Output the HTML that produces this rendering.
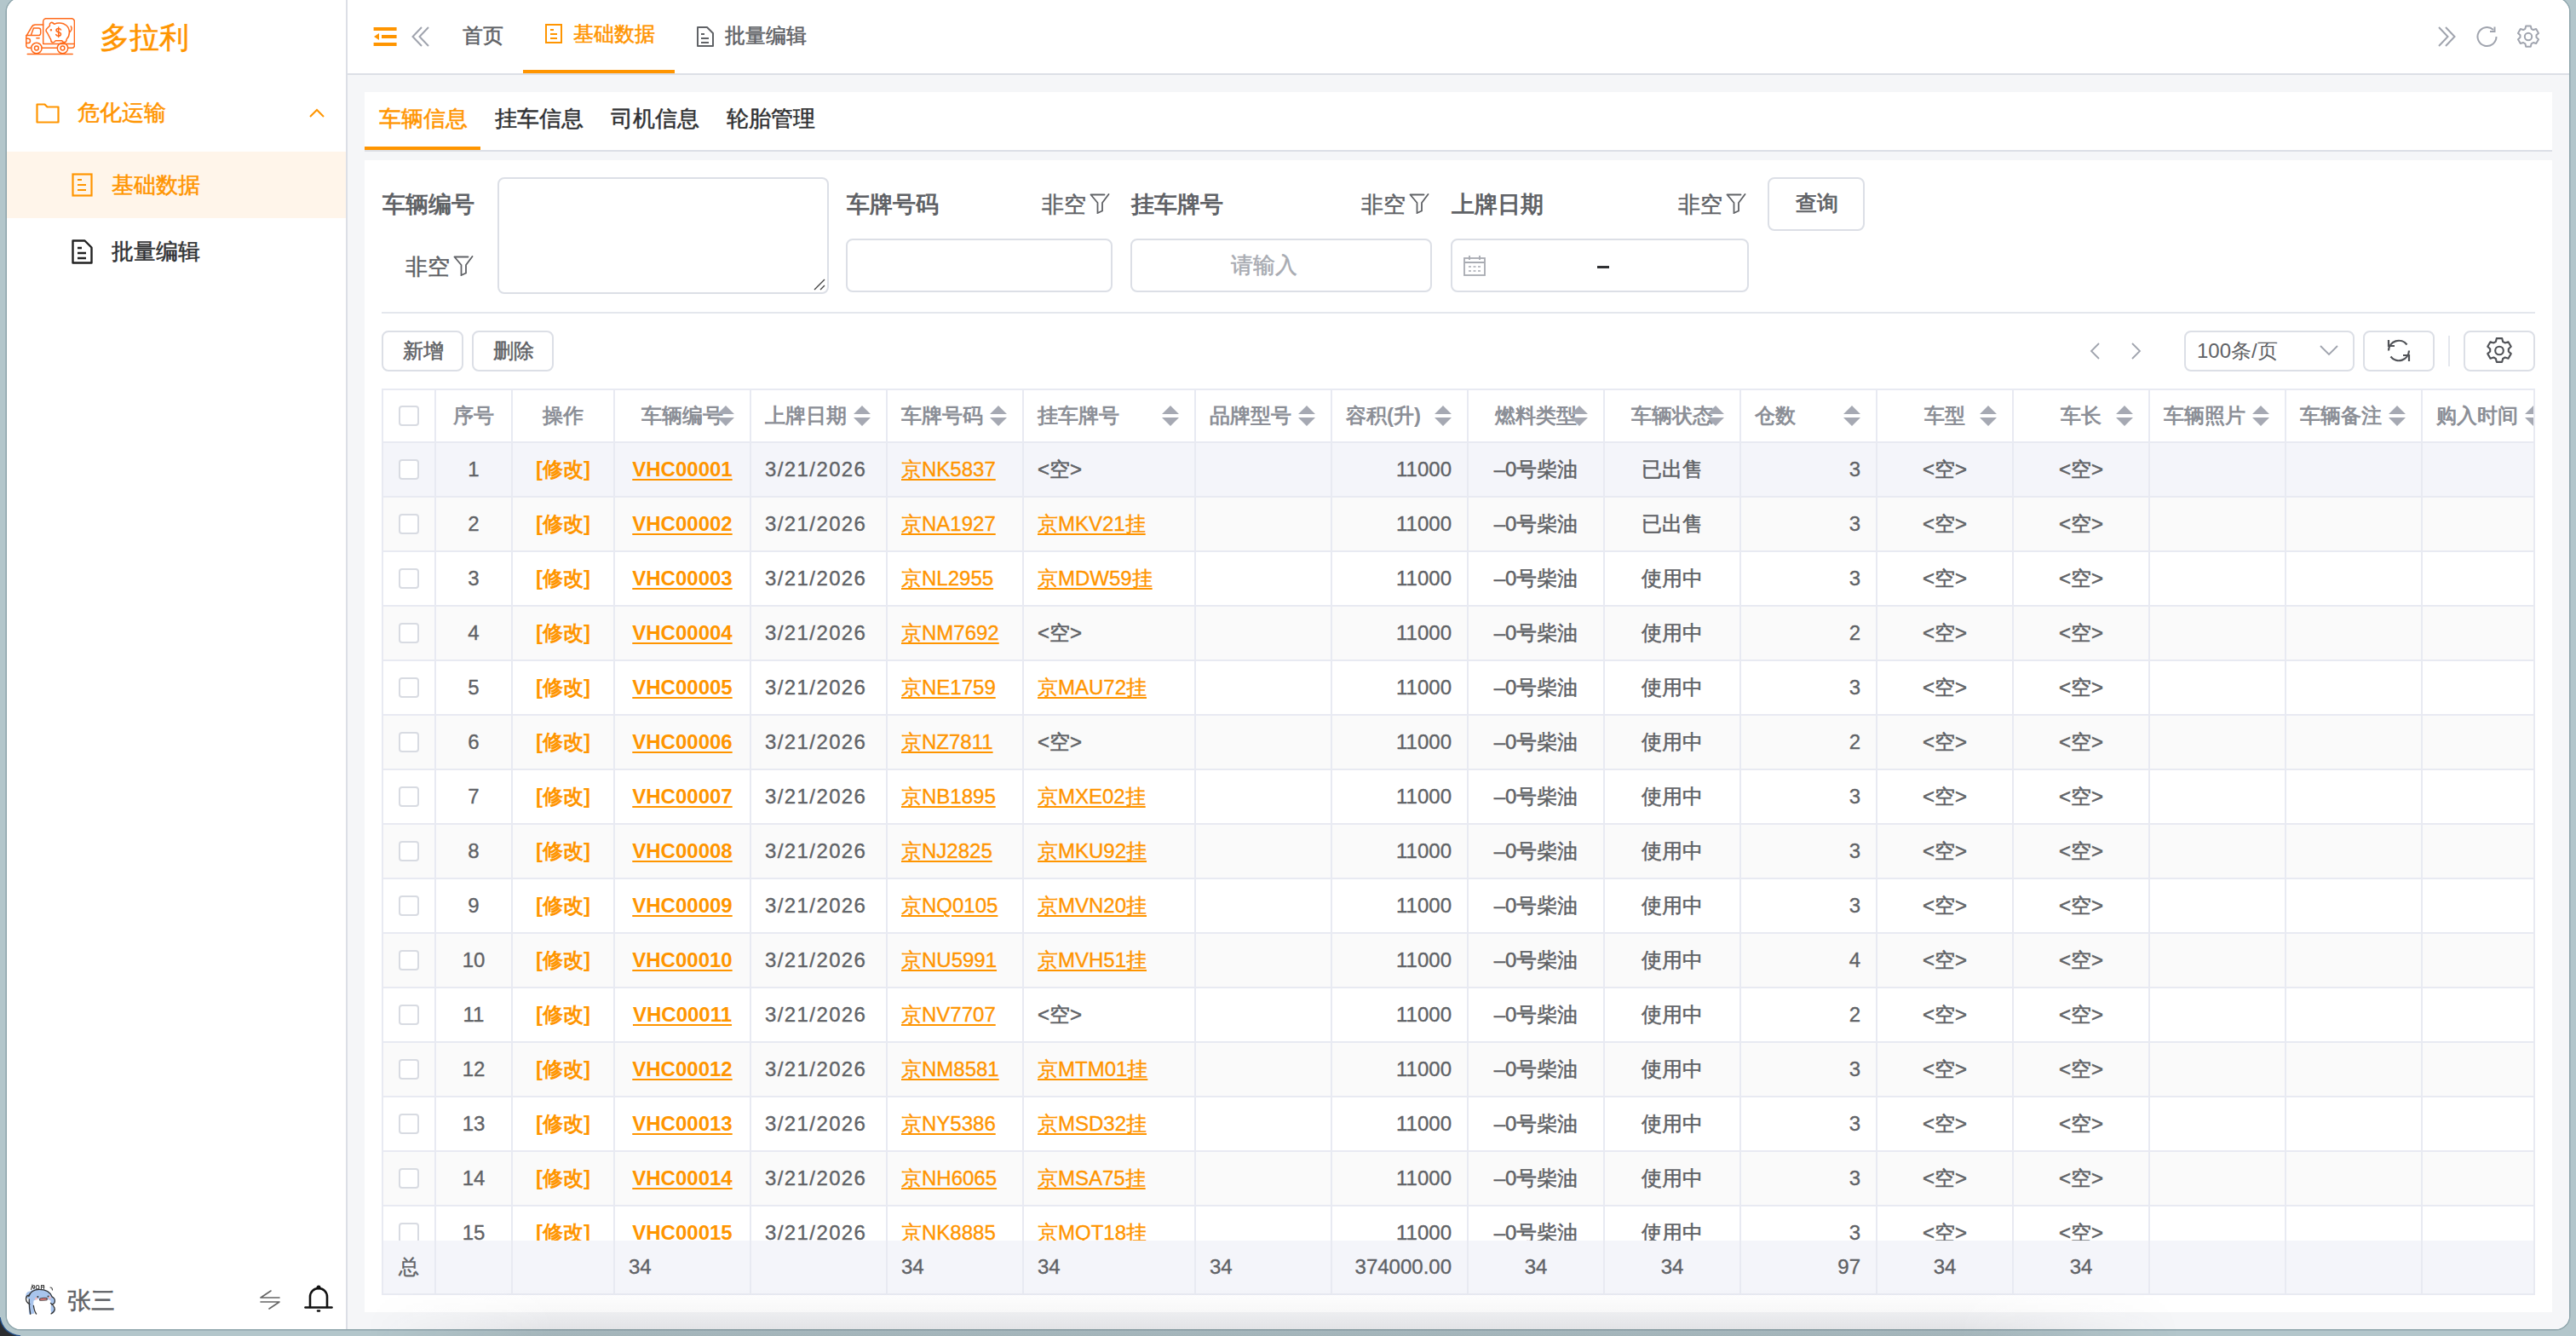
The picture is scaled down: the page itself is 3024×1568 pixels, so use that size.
<!DOCTYPE html>
<html><head><meta charset="utf-8">
<style>
*{box-sizing:border-box;margin:0;padding:0}
@media (max-width:1600px){html{zoom:0.5}}
html,body{width:3024px;height:1568px;overflow:hidden}
body{background:#b3c6cb;font-family:"Liberation Sans",sans-serif;font-weight:400;color:#606266;position:relative}
#win{position:absolute;left:8px;top:-2px;width:3008px;height:1562px;border-radius:16px;background:#fff;overflow:hidden;box-shadow:0 0 0 1.5px rgba(70,100,110,.35)}
#pg{position:absolute;left:-8px;top:2px;width:3024px;height:1568px}
.a{position:absolute}
.t{position:absolute;white-space:nowrap;line-height:1;-webkit-text-stroke:0.5px currentColor}
.ns{-webkit-text-stroke:0!important}
.side{left:0;top:0;width:406px;height:1568px;background:#fff}
.sideb{left:406px;top:0;width:2px;height:1568px;background:#dcdfe6}
.hdr{left:408px;top:0;width:2616px;height:86px;background:#fff}
.hdrb{left:408px;top:86px;width:2616px;height:2px;background:#dcdfe6}
.content{left:408px;top:88px;width:2616px;height:1480px;background:#f5f6f8}
.og{color:#ff9500}
.dk{color:#303133}
.gr{color:#606266}
.bd{font-weight:bold;-webkit-text-stroke:0}
.inp{position:absolute;border:2px solid #dcdfe6;border-radius:8px;background:#fff}
.btn{position:absolute;border:2px solid #dcdfe6;border-radius:8px;background:#fff}
/* table */
#tbl{position:absolute;left:448px;top:456px;width:2528px;height:1064px;border:2px solid #e8eaf2;overflow:hidden;background:#fff}
.tr{display:flex;height:64px;border-bottom:2px solid #e8eaf2;width:2700px}
.tr.th{height:62px}
.tr.cur{background:#f4f5fa}
.tr.str{background:#fafafa}
.td{position:relative;flex:none;height:100%;border-right:2px solid #e8eaf2;display:flex;align-items:center;font-size:24px;line-height:1;white-space:nowrap;color:#606266;-webkit-text-stroke:0.35px currentColor}
.td.ctr{justify-content:center}
.td.lft{justify-content:flex-start;padding-left:16px}
.td.rgt{justify-content:flex-end;padding-right:18px}
.th .td{color:#8c8f97;font-weight:bold;-webkit-text-stroke:0}
.sort{position:absolute;right:18px;top:18px}
.cb{display:block;width:24px;height:24px;border:2px solid #d8dbe2;border-radius:4px;background:#fff}
.op{color:#ff9500;font-weight:bold;-webkit-text-stroke:0}
.vl{color:#ff9500;font-weight:bold;-webkit-text-stroke:0;text-decoration:underline;text-underline-offset:3px;text-decoration-thickness:2px}
.dt{letter-spacing:1.4px}
.s{-webkit-text-stroke:0.5px currentColor}
.lk{color:#ff9500;text-decoration:underline;text-underline-offset:3px;text-decoration-thickness:2px}
#tbody{position:absolute;left:0;top:62px;height:936px;overflow:hidden}
.tf{position:absolute;left:0;top:998px;height:62px;background:#f4f5fa;border-bottom:none}
</style></head>
<body>
<svg style="position:absolute;left:0;top:1540px" width="30" height="28" viewBox="0 0 30 28"><path d="M0 6Q3 25 24 28H0Z" fill="#2b2d30"/><path d="M0 6Q3 25 24 28" fill="none" stroke="#24508a" stroke-width="1.4"/></svg>
<div id="win"><div id="pg">
  <div class="a side"></div>
  <div class="a sideb"></div>
  <div class="a hdr"></div>
  <div class="a hdrb"></div>
  <div class="a content"></div>

  <!-- sidebar -->
  <svg class="a" style="left:30px;top:21px" width="58" height="44" viewBox="0 0 58 44" fill="none" stroke="#ff6a1a" stroke-width="1.5" stroke-linecap="round" stroke-linejoin="round">
    <path d="M20.7 30.4V4.2a3.5 3.5 0 0 1 3.5-3.5h29.7a3.5 3.5 0 0 1 3.5 3.5v26.2H20.7"/>
    <path d="M19.2 35.2h17.9M49.8 35.2h4.8a2.8 2.8 0 0 0 2.8-2.8v-2"/>
    <path d="M20.7 8H11.6a5 5 0 0 0-4.6 3L1.3 20.6A4 4 0 0 0 .8 22.5v10a2.8 2.8 0 0 0 2.8 2.8h2.6"/>
    <path d="M.8 20.6H15.2a2.5 2.5 0 0 0 2.5-2.5v-3.6a2.5 2.5 0 0 0-2.5-2.5H9.4M9.4 12 6.3 20.6"/>
    <path d="M.8 24.2h2a2.7 2.7 0 0 1 0 5.4h-2"/>
    <path d="M12.9 23.8h3.2"/>
    <circle cx="12.9" cy="35.5" r="6.2"/><circle cx="12.9" cy="35.5" r="2.4"/>
    <circle cx="43.5" cy="35.5" r="6.2"/><circle cx="43.5" cy="35.5" r="2.4"/>
    <path d="M2.2 42.5h53"/>
    <path d="M25.5 17.5c-1.5-1.5-1.8-3.5-.6-4.8l3.5-3.4c-.3-1.4.1-2.9 1.2-3.6 1.3-.8 3 .4 4 1.6 1.7-.9 3.8-1.4 6-1.4 7 0 11.8 4.7 11.8 11.2 0 3.2-1.1 5.8-3 7.6-.6.6-.3 1.6-.5 2.4-.4 1.1-1.5 1.6-2.7 1.5-1.1-.2-1.8-.8-2.3-1.8h-7.8c-.6 1.3-1.7 2.1-3 2-1.5-.1-2.3-1.4-2.3-2.9 0-.9-.5-1.5-1.1-2.2z"/>
    <path d="M53.3 9.9c1.4 1.6 1 4.9-1.4 6.8"/>
    <path d="M38.7 10.9v11.7M41.5 14c-.4-1-1.5-1.6-2.8-1.6-1.6 0-2.7.9-2.7 2.1s1.1 1.8 2.7 2.2c1.7.4 2.8 1.1 2.8 2.4 0 1.2-1.2 2.1-2.8 2.1-1.4 0-2.5-.6-3-1.6"/>
    <circle cx="29.9" cy="14.3" r=".5" fill="#ff6a1a"/>
  </svg>
  <div class="t og" style="left:117px;top:26px;font-size:35px">多拉利</div>

  <svg class="a" style="left:42px;top:121px" width="28" height="24" viewBox="0 0 28 24" fill="none" stroke="#ff9500" stroke-width="2.2" stroke-linejoin="round"><path d="M1.5 1.5h9l3 3h13v18h-25z"/></svg>
  <div class="t og" style="left:91px;top:119px;font-size:26px">危化运输</div>
  <svg class="a" style="left:363px;top:127px" width="18" height="11" viewBox="0 0 18 11" fill="none" stroke="#ff9500" stroke-width="2"><path d="M1 10L9 2l8 8"/></svg>

  <div class="a" style="left:0;top:178px;width:406px;height:78px;background:#fff5ea"></div>
  <svg class="a" style="left:84px;top:203px" width="25" height="28" viewBox="0 0 25 28" fill="none" stroke="#ff9500" stroke-width="2.2"><rect x="1.5" y="1.5" width="22" height="25"/><path d="M7 8h5M7 14h10M7 20h10"/></svg>
  <div class="t og" style="left:131px;top:204px;font-size:26px">基础数据</div>

  <svg class="a" style="left:84px;top:281px" width="25" height="29" viewBox="0 0 25 29" fill="none" stroke="#222" stroke-width="2.4" stroke-linejoin="round"><path d="M1.5 1.5h14l8 8v18h-22z"/><path d="M7 10h5M7 16h10M7 22h10"/></svg>
  <div class="t" style="left:131px;top:282px;font-size:26px;color:#303133">批量编辑</div>

  <svg class="a" style="left:25px;top:1500px" width="45" height="48" viewBox="0 0 45 48">
    <path d="M9 42.5C8.8 36 8.5 30 9 25c-2.5-1-4-3-3.6-5.5C6 17 8 15.5 10.5 15.5 14 12.5 19.5 12.8 25 13.3c6 .5 10 4 11.5 8.5 3 1.2 4.5 4.2 3 7.5-.8 1.5-2.3 2-4 2.2 2.3 2.2 4.3 4.6 4 7.5-.5 1.6-2 2.5-4 2.7C34 37 34.5 32 34.5 29.5H14.5c0 4 .8 8.5 1 12z" fill="#a8c4ec"/>
    <path d="M14.5 26.5c3-1.5 6-2 9.5-2.2 4.5-.2 8 .8 10.5 2.2.5 4 0 10-1 15H15.5c-1-5-1.6-10-1-15z" fill="#fff"/>
    <path d="M8.8 21.5C10 16.5 15 13.3 21 13.3s12.5 2 15 8.5c2.5 1 4 3.8 3 7-.5 1.4-2 2-3.3 2.2M8.6 20.2c-2 .5-3.3 2.5-3 5 .3 2.3 2 4.5 4.3 5.5M9.3 25c-.3 6 .4 12 1.5 17.3M14.4 32.5c.6 4 1.1 7 3.2 9.5M34.5 29.5c2.6 2 4.5 4.6 4.8 7.2-.3 2-1.8 3.8-4.2 5.2" fill="none" stroke="#333" stroke-width="1.3" stroke-linecap="round"/>
    <path d="M21.6 24.2c2.8-1 5.8-1 8.6-.7v2.3c-2.8.3-5.8.5-8.6.4z" fill="#f07f7f" stroke="#333" stroke-width=".9"/>
    <circle cx="19.4" cy="22" r="1" fill="#333"/><circle cx="31.6" cy="21.6" r="1" fill="#333"/>
    <circle cx="17.6" cy="24.2" r="1.4" fill="#f8b8b8"/><circle cx="33.4" cy="23" r="1.4" fill="#f8b8b8"/>
    <path d="M11.5 13.5l1.5-5 1.5 4M14.5 8.5c1 0 1.5 1.5 1 3.5M19 8.5c2.5 0 2.5 4.5 0 4.5s-2-4.5 0-4.5M23.5 12.5V8.5h3v4M24.5 10.5h2.5M34 11c1.5 0 2.5 1.5 2.5 3" fill="none" stroke="#444" stroke-width="1.1" stroke-linecap="round"/>
  </svg>
  <div class="t" style="left:79px;top:1513px;font-size:28px;color:#606266">张三</div>
  <svg class="a" style="left:305px;top:1514px" width="24" height="23" viewBox="0 0 24 23" fill="none" stroke="#666" stroke-width="1.6" stroke-linecap="round"><path d="M1 9h22M13 1L1 9M1 14h22M23 14L11 22"/></svg>
  <svg class="a" style="left:357px;top:1508px" width="34" height="34" viewBox="0 0 34 34" fill="none" stroke="#111" stroke-width="2.6" stroke-linecap="round"><path d="M7 26V14a10 10 0 0 1 20 0v12"/><path d="M1.5 26.5h31"/><path d="M16 30.5h2" stroke-width="2.4"/><circle cx="17" cy="3" r="1.2" fill="#111"/></svg>

  <!-- header -->
  <svg class="a" style="left:438px;top:31px" width="28" height="24" viewBox="0 0 28 24" fill="#ff9500"><rect x="0.6" y="1" width="27" height="4"/><rect x="10" y="10" width="17.6" height="4"/><path d="M1 12L7 8v8z"/><rect x="0.6" y="19" width="27" height="4"/></svg>
  <svg class="a" style="left:483px;top:31px" width="22" height="24" viewBox="0 0 22 24" fill="none" stroke="#a0a4ae" stroke-width="2"><path d="M12 1L1.5 12 12 23M20 1L9.5 12 20 23"/></svg>
  <div class="t gr" style="left:543px;top:31px;font-size:23.5px">首页</div>
  <svg class="a" style="left:640px;top:28px" width="20" height="23" viewBox="0 0 20 23" fill="none" stroke="#ff9500" stroke-width="2"><rect x="1" y="1" width="18" height="21"/><path d="M6 7h4M6 12h8M6 17h8"/></svg>
  <div class="t og" style="left:673px;top:28px;font-size:24px">基础数据</div>
  <div class="a" style="left:614px;top:82px;width:178px;height:4px;background:#ff9500"></div>
  <svg class="a" style="left:818px;top:31px" width="20" height="24" viewBox="0 0 20 24" fill="none" stroke="#606266" stroke-width="2" stroke-linejoin="round"><path d="M1 1h11l7 7v15H1z"/><path d="M5 9h4M5 14h9M5 19h9"/></svg>
  <div class="t gr" style="left:851px;top:31px;font-size:23.5px">批量编辑</div>

  <svg class="a" style="left:2861px;top:31px" width="22" height="24" viewBox="0 0 22 24" fill="none" stroke="#a0a4ae" stroke-width="2"><path d="M2 1l10.5 11L2 23M10 1l10.5 11L10 23"/></svg>
  <svg class="a" style="left:2907px;top:30px" width="26" height="26" viewBox="0 0 26 26" fill="none" stroke="#a0a4ae" stroke-width="2"><path d="M23.5 13A11 11 0 1 1 20 5"/><path d="M21.5 1.5v5.5h-5.5"/></svg>
  <svg class="a" style="left:2954px;top:29px" width="28" height="28" viewBox="0 0 24 24" fill="none" stroke="#a0a4ae" stroke-width="1.7" stroke-linejoin="round"><path d="M9.6 1.2h4.8l.7 2.9 1.9 1.1 2.9-.9 2.4 4.2-2.2 2v2.2l2.2 2-2.4 4.2-2.9-.9-1.9 1.1-.7 2.9H9.6l-.7-2.9-1.9-1.1-2.9.9-2.4-4.2 2.2-2v-2.2l-2.2-2 2.4-4.2 2.9.9 1.9-1.1z"/><circle cx="12" cy="12" r="3.6"/></svg>

  <!-- tabs panel -->
  <div class="a" style="left:428px;top:108px;width:2568px;height:70px;background:#fff"></div>
  <div class="a" style="left:428px;top:176px;width:2568px;height:2px;background:#dcdfe6"></div>
  <div class="a" style="left:428px;top:172px;width:136px;height:4px;background:#ff9500"></div>
  <div class="t og" style="left:445px;top:126px;font-size:26px">车辆信息</div>
  <div class="t dk" style="left:581px;top:126px;font-size:26px">挂车信息</div>
  <div class="t dk" style="left:717px;top:126px;font-size:26px">司机信息</div>
  <div class="t dk" style="left:853px;top:126px;font-size:26px">轮胎管理</div>

  <!-- main panel -->
  <div class="a" style="left:428px;top:188px;width:2568px;height:1352px;background:#fff"></div>

  <!-- filter -->
  <div class="t bd gr" style="left:449px;top:227px;font-size:27px">车辆编号</div>
  <div class="t gr" style="left:476px;top:300px;font-size:26px">非空<svg style="vertical-align:-2px;margin-left:4px" width="24" height="24" viewBox="0 0 24 24" fill="none" stroke="#606266" stroke-width="1.8" stroke-linejoin="miter" stroke-linecap="round"><path d="M1.5 1.5H17.5M1.5 1.5L9.5 11V23L15 20.5V11L22.5 1"/></svg></div>
  <div class="inp" style="left:584px;top:208px;width:389px;height:137px"><svg class="a" style="right:2px;bottom:2px" width="14" height="14" viewBox="0 0 14 14" stroke="#444" stroke-width="1.4"><path d="M1 13L13 1M8 13l5-5"/></svg></div>

  <div class="t bd gr" style="left:994px;top:227px;font-size:27px">车牌号码</div>
  <div class="t gr" style="left:1223px;top:208px;font-size:26px;top:227px">非空<svg style="vertical-align:-2px;margin-left:4px" width="24" height="24" viewBox="0 0 24 24" fill="none" stroke="#606266" stroke-width="1.8" stroke-linejoin="miter" stroke-linecap="round"><path d="M1.5 1.5H17.5M1.5 1.5L9.5 11V23L15 20.5V11L22.5 1"/></svg></div>
  <div class="inp" style="left:993px;top:280px;width:313px;height:63px"></div>

  <div class="t bd gr" style="left:1328px;top:227px;font-size:27px">挂车牌号</div>
  <div class="t gr" style="left:1598px;top:227px;font-size:26px">非空<svg style="vertical-align:-2px;margin-left:4px" width="24" height="24" viewBox="0 0 24 24" fill="none" stroke="#606266" stroke-width="1.8" stroke-linejoin="miter" stroke-linecap="round"><path d="M1.5 1.5H17.5M1.5 1.5L9.5 11V23L15 20.5V11L22.5 1"/></svg></div>
  <div class="inp" style="left:1327px;top:280px;width:354px;height:63px"></div>
  <div class="t" style="left:1445px;top:298px;font-size:26px;color:#a8abb2">请输入</div>

  <div class="t bd gr" style="left:1704px;top:227px;font-size:27px">上牌日期</div>
  <div class="t gr" style="left:1970px;top:227px;font-size:26px">非空<svg style="vertical-align:-2px;margin-left:4px" width="24" height="24" viewBox="0 0 24 24" fill="none" stroke="#606266" stroke-width="1.8" stroke-linejoin="miter" stroke-linecap="round"><path d="M1.5 1.5H17.5M1.5 1.5L9.5 11V23L15 20.5V11L22.5 1"/></svg></div>
  <div class="inp" style="left:1703px;top:280px;width:350px;height:63px"></div>
  <svg class="a" style="left:1718px;top:299px" width="26" height="25" viewBox="0 0 26 25" fill="none" stroke="#a8abb2" stroke-width="1.8"><rect x="1" y="4" width="24" height="20"/><path d="M1 9h24M7 1v5M19 1v5"/><path d="M6 14h3M11.5 14h3M17 14h3M6 19h3M11.5 19h3M17 19h3" stroke-width="1.4"/></svg>
  <div class="a" style="left:1875px;top:312px;width:14px;height:3px;background:#303133"></div>

  <div class="btn" style="left:2075px;top:208px;width:114px;height:63px"></div>
  <div class="t gr" style="left:2108px;top:226px;font-size:25px;-webkit-text-stroke:0.8px currentColor">查询</div>

  <div class="a" style="left:448px;top:366px;width:2528px;height:2px;background:#e4e7ed"></div>

  <!-- toolbar -->
  <div class="btn" style="left:448px;top:388px;width:96px;height:48px"></div>
  <div class="t gr" style="left:473px;top:400px;font-size:24px">新增</div>
  <div class="btn" style="left:554px;top:388px;width:96px;height:48px"></div>
  <div class="t gr" style="left:579px;top:400px;font-size:24px">删除</div>

  <svg class="a" style="left:2453px;top:402px" width="12" height="20" viewBox="0 0 12 20" fill="none" stroke="#a0a4ae" stroke-width="1.8"><path d="M11 1L2 10l9 9"/></svg>
  <svg class="a" style="left:2502px;top:402px" width="12" height="20" viewBox="0 0 12 20" fill="none" stroke="#a0a4ae" stroke-width="1.8"><path d="M1 1l9 9-9 9"/></svg>
  <div class="btn" style="left:2564px;top:388px;width:200px;height:48px"></div>
  <div class="t gr ns" style="left:2579px;top:400px;font-size:24px">100条/页</div>
  <svg class="a" style="left:2723px;top:405px" width="22" height="13" viewBox="0 0 22 13" fill="none" stroke="#a0a4ae" stroke-width="1.8"><path d="M1 1l10 10L21 1"/></svg>
  <div class="btn" style="left:2774px;top:388px;width:84px;height:48px"></div>
  <svg class="a" style="left:2802px;top:397px" width="28" height="29" viewBox="0 0 28 29" fill="none" stroke="#505257" stroke-width="2.2"><path d="M2 14.5A12 12 0 0 1 23.5 7.5"/><path d="M26 14.5A12 12 0 0 1 4.5 21.5"/><path d="M2 2v7h7M26 27v-7h-7"/></svg>
  <div class="a" style="left:2874px;top:394px;width:2px;height:36px;background:#e4e7ed"></div>
  <div class="btn" style="left:2892px;top:388px;width:84px;height:48px"></div>
  <svg class="a" style="left:2918px;top:395px" width="32" height="33" viewBox="0 0 24 24" fill="none" stroke="#505257" stroke-width="1.6" stroke-linejoin="round"><path d="M9.6 1.2h4.8l.7 2.9 1.9 1.1 2.9-.9 2.4 4.2-2.2 2v2.2l2.2 2-2.4 4.2-2.9-.9-1.9 1.1-.7 2.9H9.6l-.7-2.9-1.9-1.1-2.9.9-2.4-4.2 2.2-2v-2.2l-2.2-2 2.4-4.2 2.9.9 1.9-1.1z"/><circle cx="12" cy="12" r="3.6"/></svg>

  <!-- table -->
  <div id="tbl">
    <div class="tr th"><div class="td ctr" style="width:62px"><i class="cb"></i></div><div class="td ctr" style="width:90px"><span class="ht">序号</span></div><div class="td ctr" style="width:120px"><span class="ht">操作</span></div><div class="td ctr" style="width:160px"><span class="ht">车辆编号</span><svg class="sort" width="20" height="24" viewBox="0 0 20 24"><path d="M10 0L20 10H0Z M0 14H20L10 24Z" fill="#a6a9b3"/></svg></div><div class="td lft" style="width:160px"><span class="ht">上牌日期</span><svg class="sort" width="20" height="24" viewBox="0 0 20 24"><path d="M10 0L20 10H0Z M0 14H20L10 24Z" fill="#a6a9b3"/></svg></div><div class="td lft" style="width:160px"><span class="ht">车牌号码</span><svg class="sort" width="20" height="24" viewBox="0 0 20 24"><path d="M10 0L20 10H0Z M0 14H20L10 24Z" fill="#a6a9b3"/></svg></div><div class="td lft" style="width:202px"><span class="ht">挂车牌号</span><svg class="sort" width="20" height="24" viewBox="0 0 20 24"><path d="M10 0L20 10H0Z M0 14H20L10 24Z" fill="#a6a9b3"/></svg></div><div class="td lft" style="width:160px"><span class="ht">品牌型号</span><svg class="sort" width="20" height="24" viewBox="0 0 20 24"><path d="M10 0L20 10H0Z M0 14H20L10 24Z" fill="#a6a9b3"/></svg></div><div class="td lft" style="width:160px"><span class="ht">容积(升)</span><svg class="sort" width="20" height="24" viewBox="0 0 20 24"><path d="M10 0L20 10H0Z M0 14H20L10 24Z" fill="#a6a9b3"/></svg></div><div class="td ctr" style="width:160px"><span class="ht">燃料类型</span><svg class="sort" width="20" height="24" viewBox="0 0 20 24"><path d="M10 0L20 10H0Z M0 14H20L10 24Z" fill="#a6a9b3"/></svg></div><div class="td ctr" style="width:160px"><span class="ht">车辆状态</span><svg class="sort" width="20" height="24" viewBox="0 0 20 24"><path d="M10 0L20 10H0Z M0 14H20L10 24Z" fill="#a6a9b3"/></svg></div><div class="td lft" style="width:160px"><span class="ht">仓数</span><svg class="sort" width="20" height="24" viewBox="0 0 20 24"><path d="M10 0L20 10H0Z M0 14H20L10 24Z" fill="#a6a9b3"/></svg></div><div class="td ctr" style="width:160px"><span class="ht">车型</span><svg class="sort" width="20" height="24" viewBox="0 0 20 24"><path d="M10 0L20 10H0Z M0 14H20L10 24Z" fill="#a6a9b3"/></svg></div><div class="td ctr" style="width:160px"><span class="ht">车长</span><svg class="sort" width="20" height="24" viewBox="0 0 20 24"><path d="M10 0L20 10H0Z M0 14H20L10 24Z" fill="#a6a9b3"/></svg></div><div class="td lft" style="width:160px"><span class="ht">车辆照片</span><svg class="sort" width="20" height="24" viewBox="0 0 20 24"><path d="M10 0L20 10H0Z M0 14H20L10 24Z" fill="#a6a9b3"/></svg></div><div class="td lft" style="width:160px"><span class="ht">车辆备注</span><svg class="sort" width="20" height="24" viewBox="0 0 20 24"><path d="M10 0L20 10H0Z M0 14H20L10 24Z" fill="#a6a9b3"/></svg></div><div class="td lft" style="width:160px"><span class="ht">购入时间</span><svg class="sort" width="20" height="24" viewBox="0 0 20 24"><path d="M10 0L20 10H0Z M0 14H20L10 24Z" fill="#a6a9b3"/></svg></div></div>
    <div id="tbody"><div class="tr cur"><div class="td ctr" style="width:62px"><i class="cb"></i></div><div class="td ctr" style="width:90px"><span>1</span></div><div class="td ctr" style="width:120px"><span class="op">[修改]</span></div><div class="td ctr" style="width:160px"><span class="vl">VHC00001</span></div><div class="td lft" style="width:160px"><span class="dt">3/21/2026</span></div><div class="td lft" style="width:160px"><span class="lk">京NK5837</span></div><div class="td lft" style="width:202px"><span class="s">&lt;空&gt;</span></div><div class="td lft" style="width:160px"></div><div class="td rgt" style="width:160px"><span>11000</span></div><div class="td ctr" style="width:160px"><span class="s">–0号柴油</span></div><div class="td ctr" style="width:160px"><span class="s">已出售</span></div><div class="td rgt" style="width:160px"><span>3</span></div><div class="td ctr" style="width:160px"><span class="s">&lt;空&gt;</span></div><div class="td ctr" style="width:160px"><span class="s">&lt;空&gt;</span></div><div class="td lft" style="width:160px"></div><div class="td lft" style="width:160px"></div><div class="td lft" style="width:160px"></div></div><div class="tr str"><div class="td ctr" style="width:62px"><i class="cb"></i></div><div class="td ctr" style="width:90px"><span>2</span></div><div class="td ctr" style="width:120px"><span class="op">[修改]</span></div><div class="td ctr" style="width:160px"><span class="vl">VHC00002</span></div><div class="td lft" style="width:160px"><span class="dt">3/21/2026</span></div><div class="td lft" style="width:160px"><span class="lk">京NA1927</span></div><div class="td lft" style="width:202px"><span class="lk">京MKV21挂</span></div><div class="td lft" style="width:160px"></div><div class="td rgt" style="width:160px"><span>11000</span></div><div class="td ctr" style="width:160px"><span class="s">–0号柴油</span></div><div class="td ctr" style="width:160px"><span class="s">已出售</span></div><div class="td rgt" style="width:160px"><span>3</span></div><div class="td ctr" style="width:160px"><span class="s">&lt;空&gt;</span></div><div class="td ctr" style="width:160px"><span class="s">&lt;空&gt;</span></div><div class="td lft" style="width:160px"></div><div class="td lft" style="width:160px"></div><div class="td lft" style="width:160px"></div></div><div class="tr "><div class="td ctr" style="width:62px"><i class="cb"></i></div><div class="td ctr" style="width:90px"><span>3</span></div><div class="td ctr" style="width:120px"><span class="op">[修改]</span></div><div class="td ctr" style="width:160px"><span class="vl">VHC00003</span></div><div class="td lft" style="width:160px"><span class="dt">3/21/2026</span></div><div class="td lft" style="width:160px"><span class="lk">京NL2955</span></div><div class="td lft" style="width:202px"><span class="lk">京MDW59挂</span></div><div class="td lft" style="width:160px"></div><div class="td rgt" style="width:160px"><span>11000</span></div><div class="td ctr" style="width:160px"><span class="s">–0号柴油</span></div><div class="td ctr" style="width:160px"><span class="s">使用中</span></div><div class="td rgt" style="width:160px"><span>3</span></div><div class="td ctr" style="width:160px"><span class="s">&lt;空&gt;</span></div><div class="td ctr" style="width:160px"><span class="s">&lt;空&gt;</span></div><div class="td lft" style="width:160px"></div><div class="td lft" style="width:160px"></div><div class="td lft" style="width:160px"></div></div><div class="tr str"><div class="td ctr" style="width:62px"><i class="cb"></i></div><div class="td ctr" style="width:90px"><span>4</span></div><div class="td ctr" style="width:120px"><span class="op">[修改]</span></div><div class="td ctr" style="width:160px"><span class="vl">VHC00004</span></div><div class="td lft" style="width:160px"><span class="dt">3/21/2026</span></div><div class="td lft" style="width:160px"><span class="lk">京NM7692</span></div><div class="td lft" style="width:202px"><span class="s">&lt;空&gt;</span></div><div class="td lft" style="width:160px"></div><div class="td rgt" style="width:160px"><span>11000</span></div><div class="td ctr" style="width:160px"><span class="s">–0号柴油</span></div><div class="td ctr" style="width:160px"><span class="s">使用中</span></div><div class="td rgt" style="width:160px"><span>2</span></div><div class="td ctr" style="width:160px"><span class="s">&lt;空&gt;</span></div><div class="td ctr" style="width:160px"><span class="s">&lt;空&gt;</span></div><div class="td lft" style="width:160px"></div><div class="td lft" style="width:160px"></div><div class="td lft" style="width:160px"></div></div><div class="tr "><div class="td ctr" style="width:62px"><i class="cb"></i></div><div class="td ctr" style="width:90px"><span>5</span></div><div class="td ctr" style="width:120px"><span class="op">[修改]</span></div><div class="td ctr" style="width:160px"><span class="vl">VHC00005</span></div><div class="td lft" style="width:160px"><span class="dt">3/21/2026</span></div><div class="td lft" style="width:160px"><span class="lk">京NE1759</span></div><div class="td lft" style="width:202px"><span class="lk">京MAU72挂</span></div><div class="td lft" style="width:160px"></div><div class="td rgt" style="width:160px"><span>11000</span></div><div class="td ctr" style="width:160px"><span class="s">–0号柴油</span></div><div class="td ctr" style="width:160px"><span class="s">使用中</span></div><div class="td rgt" style="width:160px"><span>3</span></div><div class="td ctr" style="width:160px"><span class="s">&lt;空&gt;</span></div><div class="td ctr" style="width:160px"><span class="s">&lt;空&gt;</span></div><div class="td lft" style="width:160px"></div><div class="td lft" style="width:160px"></div><div class="td lft" style="width:160px"></div></div><div class="tr str"><div class="td ctr" style="width:62px"><i class="cb"></i></div><div class="td ctr" style="width:90px"><span>6</span></div><div class="td ctr" style="width:120px"><span class="op">[修改]</span></div><div class="td ctr" style="width:160px"><span class="vl">VHC00006</span></div><div class="td lft" style="width:160px"><span class="dt">3/21/2026</span></div><div class="td lft" style="width:160px"><span class="lk">京NZ7811</span></div><div class="td lft" style="width:202px"><span class="s">&lt;空&gt;</span></div><div class="td lft" style="width:160px"></div><div class="td rgt" style="width:160px"><span>11000</span></div><div class="td ctr" style="width:160px"><span class="s">–0号柴油</span></div><div class="td ctr" style="width:160px"><span class="s">使用中</span></div><div class="td rgt" style="width:160px"><span>2</span></div><div class="td ctr" style="width:160px"><span class="s">&lt;空&gt;</span></div><div class="td ctr" style="width:160px"><span class="s">&lt;空&gt;</span></div><div class="td lft" style="width:160px"></div><div class="td lft" style="width:160px"></div><div class="td lft" style="width:160px"></div></div><div class="tr "><div class="td ctr" style="width:62px"><i class="cb"></i></div><div class="td ctr" style="width:90px"><span>7</span></div><div class="td ctr" style="width:120px"><span class="op">[修改]</span></div><div class="td ctr" style="width:160px"><span class="vl">VHC00007</span></div><div class="td lft" style="width:160px"><span class="dt">3/21/2026</span></div><div class="td lft" style="width:160px"><span class="lk">京NB1895</span></div><div class="td lft" style="width:202px"><span class="lk">京MXE02挂</span></div><div class="td lft" style="width:160px"></div><div class="td rgt" style="width:160px"><span>11000</span></div><div class="td ctr" style="width:160px"><span class="s">–0号柴油</span></div><div class="td ctr" style="width:160px"><span class="s">使用中</span></div><div class="td rgt" style="width:160px"><span>3</span></div><div class="td ctr" style="width:160px"><span class="s">&lt;空&gt;</span></div><div class="td ctr" style="width:160px"><span class="s">&lt;空&gt;</span></div><div class="td lft" style="width:160px"></div><div class="td lft" style="width:160px"></div><div class="td lft" style="width:160px"></div></div><div class="tr str"><div class="td ctr" style="width:62px"><i class="cb"></i></div><div class="td ctr" style="width:90px"><span>8</span></div><div class="td ctr" style="width:120px"><span class="op">[修改]</span></div><div class="td ctr" style="width:160px"><span class="vl">VHC00008</span></div><div class="td lft" style="width:160px"><span class="dt">3/21/2026</span></div><div class="td lft" style="width:160px"><span class="lk">京NJ2825</span></div><div class="td lft" style="width:202px"><span class="lk">京MKU92挂</span></div><div class="td lft" style="width:160px"></div><div class="td rgt" style="width:160px"><span>11000</span></div><div class="td ctr" style="width:160px"><span class="s">–0号柴油</span></div><div class="td ctr" style="width:160px"><span class="s">使用中</span></div><div class="td rgt" style="width:160px"><span>3</span></div><div class="td ctr" style="width:160px"><span class="s">&lt;空&gt;</span></div><div class="td ctr" style="width:160px"><span class="s">&lt;空&gt;</span></div><div class="td lft" style="width:160px"></div><div class="td lft" style="width:160px"></div><div class="td lft" style="width:160px"></div></div><div class="tr "><div class="td ctr" style="width:62px"><i class="cb"></i></div><div class="td ctr" style="width:90px"><span>9</span></div><div class="td ctr" style="width:120px"><span class="op">[修改]</span></div><div class="td ctr" style="width:160px"><span class="vl">VHC00009</span></div><div class="td lft" style="width:160px"><span class="dt">3/21/2026</span></div><div class="td lft" style="width:160px"><span class="lk">京NQ0105</span></div><div class="td lft" style="width:202px"><span class="lk">京MVN20挂</span></div><div class="td lft" style="width:160px"></div><div class="td rgt" style="width:160px"><span>11000</span></div><div class="td ctr" style="width:160px"><span class="s">–0号柴油</span></div><div class="td ctr" style="width:160px"><span class="s">使用中</span></div><div class="td rgt" style="width:160px"><span>3</span></div><div class="td ctr" style="width:160px"><span class="s">&lt;空&gt;</span></div><div class="td ctr" style="width:160px"><span class="s">&lt;空&gt;</span></div><div class="td lft" style="width:160px"></div><div class="td lft" style="width:160px"></div><div class="td lft" style="width:160px"></div></div><div class="tr str"><div class="td ctr" style="width:62px"><i class="cb"></i></div><div class="td ctr" style="width:90px"><span>10</span></div><div class="td ctr" style="width:120px"><span class="op">[修改]</span></div><div class="td ctr" style="width:160px"><span class="vl">VHC00010</span></div><div class="td lft" style="width:160px"><span class="dt">3/21/2026</span></div><div class="td lft" style="width:160px"><span class="lk">京NU5991</span></div><div class="td lft" style="width:202px"><span class="lk">京MVH51挂</span></div><div class="td lft" style="width:160px"></div><div class="td rgt" style="width:160px"><span>11000</span></div><div class="td ctr" style="width:160px"><span class="s">–0号柴油</span></div><div class="td ctr" style="width:160px"><span class="s">使用中</span></div><div class="td rgt" style="width:160px"><span>4</span></div><div class="td ctr" style="width:160px"><span class="s">&lt;空&gt;</span></div><div class="td ctr" style="width:160px"><span class="s">&lt;空&gt;</span></div><div class="td lft" style="width:160px"></div><div class="td lft" style="width:160px"></div><div class="td lft" style="width:160px"></div></div><div class="tr "><div class="td ctr" style="width:62px"><i class="cb"></i></div><div class="td ctr" style="width:90px"><span>11</span></div><div class="td ctr" style="width:120px"><span class="op">[修改]</span></div><div class="td ctr" style="width:160px"><span class="vl">VHC00011</span></div><div class="td lft" style="width:160px"><span class="dt">3/21/2026</span></div><div class="td lft" style="width:160px"><span class="lk">京NV7707</span></div><div class="td lft" style="width:202px"><span class="s">&lt;空&gt;</span></div><div class="td lft" style="width:160px"></div><div class="td rgt" style="width:160px"><span>11000</span></div><div class="td ctr" style="width:160px"><span class="s">–0号柴油</span></div><div class="td ctr" style="width:160px"><span class="s">使用中</span></div><div class="td rgt" style="width:160px"><span>2</span></div><div class="td ctr" style="width:160px"><span class="s">&lt;空&gt;</span></div><div class="td ctr" style="width:160px"><span class="s">&lt;空&gt;</span></div><div class="td lft" style="width:160px"></div><div class="td lft" style="width:160px"></div><div class="td lft" style="width:160px"></div></div><div class="tr str"><div class="td ctr" style="width:62px"><i class="cb"></i></div><div class="td ctr" style="width:90px"><span>12</span></div><div class="td ctr" style="width:120px"><span class="op">[修改]</span></div><div class="td ctr" style="width:160px"><span class="vl">VHC00012</span></div><div class="td lft" style="width:160px"><span class="dt">3/21/2026</span></div><div class="td lft" style="width:160px"><span class="lk">京NM8581</span></div><div class="td lft" style="width:202px"><span class="lk">京MTM01挂</span></div><div class="td lft" style="width:160px"></div><div class="td rgt" style="width:160px"><span>11000</span></div><div class="td ctr" style="width:160px"><span class="s">–0号柴油</span></div><div class="td ctr" style="width:160px"><span class="s">使用中</span></div><div class="td rgt" style="width:160px"><span>3</span></div><div class="td ctr" style="width:160px"><span class="s">&lt;空&gt;</span></div><div class="td ctr" style="width:160px"><span class="s">&lt;空&gt;</span></div><div class="td lft" style="width:160px"></div><div class="td lft" style="width:160px"></div><div class="td lft" style="width:160px"></div></div><div class="tr "><div class="td ctr" style="width:62px"><i class="cb"></i></div><div class="td ctr" style="width:90px"><span>13</span></div><div class="td ctr" style="width:120px"><span class="op">[修改]</span></div><div class="td ctr" style="width:160px"><span class="vl">VHC00013</span></div><div class="td lft" style="width:160px"><span class="dt">3/21/2026</span></div><div class="td lft" style="width:160px"><span class="lk">京NY5386</span></div><div class="td lft" style="width:202px"><span class="lk">京MSD32挂</span></div><div class="td lft" style="width:160px"></div><div class="td rgt" style="width:160px"><span>11000</span></div><div class="td ctr" style="width:160px"><span class="s">–0号柴油</span></div><div class="td ctr" style="width:160px"><span class="s">使用中</span></div><div class="td rgt" style="width:160px"><span>3</span></div><div class="td ctr" style="width:160px"><span class="s">&lt;空&gt;</span></div><div class="td ctr" style="width:160px"><span class="s">&lt;空&gt;</span></div><div class="td lft" style="width:160px"></div><div class="td lft" style="width:160px"></div><div class="td lft" style="width:160px"></div></div><div class="tr str"><div class="td ctr" style="width:62px"><i class="cb"></i></div><div class="td ctr" style="width:90px"><span>14</span></div><div class="td ctr" style="width:120px"><span class="op">[修改]</span></div><div class="td ctr" style="width:160px"><span class="vl">VHC00014</span></div><div class="td lft" style="width:160px"><span class="dt">3/21/2026</span></div><div class="td lft" style="width:160px"><span class="lk">京NH6065</span></div><div class="td lft" style="width:202px"><span class="lk">京MSA75挂</span></div><div class="td lft" style="width:160px"></div><div class="td rgt" style="width:160px"><span>11000</span></div><div class="td ctr" style="width:160px"><span class="s">–0号柴油</span></div><div class="td ctr" style="width:160px"><span class="s">使用中</span></div><div class="td rgt" style="width:160px"><span>3</span></div><div class="td ctr" style="width:160px"><span class="s">&lt;空&gt;</span></div><div class="td ctr" style="width:160px"><span class="s">&lt;空&gt;</span></div><div class="td lft" style="width:160px"></div><div class="td lft" style="width:160px"></div><div class="td lft" style="width:160px"></div></div><div class="tr "><div class="td ctr" style="width:62px"><i class="cb"></i></div><div class="td ctr" style="width:90px"><span>15</span></div><div class="td ctr" style="width:120px"><span class="op">[修改]</span></div><div class="td ctr" style="width:160px"><span class="vl">VHC00015</span></div><div class="td lft" style="width:160px"><span class="dt">3/21/2026</span></div><div class="td lft" style="width:160px"><span class="lk">京NK8885</span></div><div class="td lft" style="width:202px"><span class="lk">京MQT18挂</span></div><div class="td lft" style="width:160px"></div><div class="td rgt" style="width:160px"><span>11000</span></div><div class="td ctr" style="width:160px"><span class="s">–0号柴油</span></div><div class="td ctr" style="width:160px"><span class="s">使用中</span></div><div class="td rgt" style="width:160px"><span>3</span></div><div class="td ctr" style="width:160px"><span class="s">&lt;空&gt;</span></div><div class="td ctr" style="width:160px"><span class="s">&lt;空&gt;</span></div><div class="td lft" style="width:160px"></div><div class="td lft" style="width:160px"></div><div class="td lft" style="width:160px"></div></div></div>
    <div class="tr tf"><div class="td ctr" style="width:62px"><span>总</span></div><div class="td ctr" style="width:90px"><span></span></div><div class="td ctr" style="width:120px"><span></span></div><div class="td lft" style="width:160px"><span>34</span></div><div class="td lft" style="width:160px"><span></span></div><div class="td lft" style="width:160px"><span>34</span></div><div class="td lft" style="width:202px"><span>34</span></div><div class="td lft" style="width:160px"><span>34</span></div><div class="td rgt" style="width:160px"><span>374000.00</span></div><div class="td ctr" style="width:160px"><span>34</span></div><div class="td ctr" style="width:160px"><span>34</span></div><div class="td rgt" style="width:160px"><span>97</span></div><div class="td ctr" style="width:160px"><span>34</span></div><div class="td ctr" style="width:160px"><span>34</span></div><div class="td lft" style="width:160px"><span></span></div><div class="td lft" style="width:160px"><span></span></div><div class="td lft" style="width:160px"><span></span></div></div>
  </div>

</div></div>
<div style="position:absolute;left:0;top:1512px;width:3024px;height:56px;pointer-events:none;background:linear-gradient(rgba(40,40,50,0) 0%,rgba(40,40,50,.03) 45%,rgba(40,40,50,.08) 80%,rgba(40,40,50,.11) 100%);-webkit-mask-image:linear-gradient(to right,transparent 430px,#000 650px,#000 2300px,transparent 2560px)"></div>
</body></html>
